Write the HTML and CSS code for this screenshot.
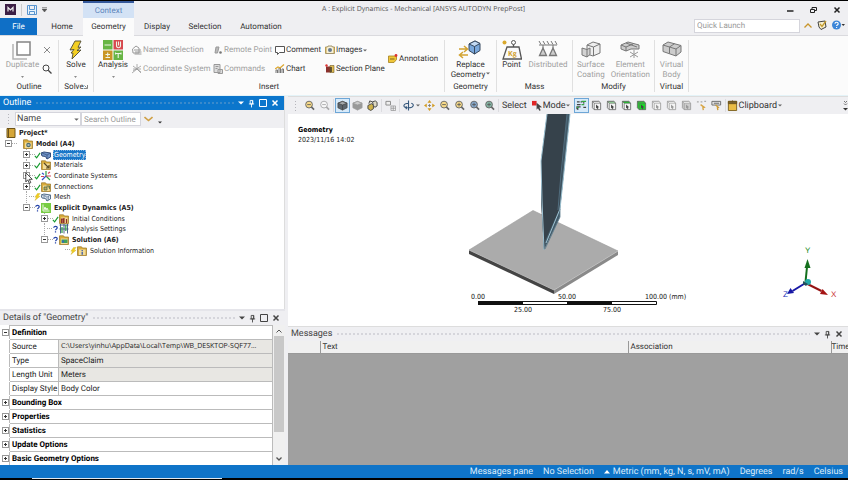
FILE: index.html
```html
<!DOCTYPE html>
<html lang="en">
<head>
<meta charset="utf-8">
<title>A : Explicit Dynamics - Mechanical</title>
<link rel="stylesheet" href="styles.css">
</head>
<body>
<svg class="defs" aria-hidden="true">
  <symbol id="i-pin" viewBox="0 0 8 10"><path d="M2.5 1.5h3v4h-3zM1 5.5h6M4 5.5v4" fill="none" stroke="currentColor"/><path d="M4.5 1.5h1v4h-1z" fill="currentColor"/></symbol>
  <symbol id="i-max" viewBox="0 0 8 8"><path d="M.5.5h7v7h-7z" fill="none" stroke="currentColor"/></symbol>
  <symbol id="i-x" viewBox="0 0 8 8"><path d="M1.5 1.5l5 5M6.5 1.5l-5 5" fill="none" stroke="currentColor" stroke-width="1.5"/></symbol>
  <symbol id="i-down" viewBox="0 0 6 4"><path d="M0 .5h6L3 3.5z" fill="currentColor"/></symbol>
  <symbol id="i-check" viewBox="0 0 8 8"><path d="M1 5l2 2.2L7 1.5" fill="none" stroke="#159a2e" stroke-width="1.3"/></symbol>
  <symbol id="i-bolt" viewBox="0 0 8 8"><path d="M4 0L1 4.2h2L1 8l6-5H4.500L7 0z" fill="#f2cf1d" stroke="#c9a512" stroke-width=".4"/></symbol>
  <symbol id="i-ask" viewBox="0 0 8 8"><path d="M2 2.500C2 .6 6 .6 6 2.600 6 4 4 3.800 4 5.500M4 6.500V8" fill="none" stroke="#2543a8" stroke-width="1.400"/></symbol>
  <symbol id="i-folder" viewBox="0 0 10 10"><path d="M.5 2V.8h4L5.500 2h4v7.500h-9z" fill="#d9ac3c" stroke="#967223" stroke-width=".7"/><path d="M2 3.500h6.500V9H2z" fill="#f2dc99"/></symbol>
  <symbol id="i-mag" viewBox="0 0 12 12"><circle cx="5.500" cy="5" r="3.700" fill="var(--lens,#fff)" stroke="#666"/><path d="M3.500 5h4" stroke="#555" stroke-width=".9"/><path d="M8 7.500l3 3" stroke="#666" stroke-width="1.700"/></symbol>
  <symbol id="i-magplus" viewBox="0 0 12 12"><use href="#i-mag"/><path d="M5.500 3v4" stroke="#555" stroke-width=".9"/></symbol>
  <symbol id="i-cube" viewBox="0 0 12 12"><path d="M1 3.500L6 1.500l5 2v5l-5 2.500-5-2.500z" fill="var(--side,#ddd)" stroke="var(--line,#555)" stroke-width=".8"/><path d="M1 3.500l5-2 5 2-5 2z" fill="var(--top,#f5f5f5)" stroke="var(--line,#555)" stroke-width=".8"/><path d="M6 5.500V11" stroke="var(--line,#555)" stroke-width=".8"/></symbol>
  <symbol id="i-pick" viewBox="0 0 12 12"><path d="M1.500 1.500h7l2 2v7h-7l-2-2z" fill="var(--face,#f4f4f4)" stroke="var(--edge,#666)" stroke-width=".9"/><path d="M1.500 1.500h7l2 2h-7z" fill="var(--lid,#f4f4f4)" stroke="var(--edge,#666)" stroke-width=".7"/><path d="M3.500 3.500v7" stroke="var(--edge,#666)" stroke-width=".8"/><path d="M5.500 5l3.500 3-1.500.2.500 1.800-1 .2-.5-1.700-1 .9z" fill="var(--edge,#444)"/></symbol>
</svg>

<div class="app">
  <header class="top">
    <div class="caption">
      <div class="quick">
        <svg width="11" height="11" viewBox="0 0 11 11"><path d="M0 0h11v11H0z" fill="#3c1f45"/><path d="M3 7.500v-4l2.500 2.500L8 3.500v4" fill="none" stroke="#eee" stroke-width="1.200"/></svg>
        <i class="bar"></i>
        <svg width="10" height="10" viewBox="0 0 10 10"><path d="M.5.5h9v9h-9zM2.500.5v4h5v-4M2.500 9.500V6.500h5v3" fill="#e7f3fc" stroke="#5a95cf"/></svg>
        <svg width="5" height="5" viewBox="0 0 5 5"><path d="M0 .5h5M0 2h5L2.500 5z" fill="#555" stroke="#555" stroke-width=".5"/></svg>
      </div>
      <div class="context">Context</div>
      <h1>A : Explicit Dynamics - Mechanical [ANSYS AUTODYN PrepPost]</h1>
      <div class="window">
        <button aria-label="Minimize"><svg width="7" height="8" viewBox="0 0 7 8"><path d="M0 5h6.500" stroke="#222" stroke-width="1.500"/></svg></button>
        <button aria-label="Restore"><svg width="7" height="8" viewBox="0 0 7 8"><path d="M.5 3.500h4v3h-4zM2 3V1.500h4.500v3H5" fill="none" stroke="#222"/></svg></button>
        <button aria-label="Close"><svg width="8" height="8"><use href="#i-x"/></svg></button>
      </div>
    </div>
    <div class="tabs">
      <nav>
        <a class="file" href="#file">File</a><a class="home" href="#home">Home</a><a class="geo" href="#geometry">Geometry</a><a class="disp" href="#display">Display</a><a class="sel" href="#selection">Selection</a><a class="auto" href="#automation">Automation</a>
      </nav>
      <input type="search" aria-label="Quick Launch" placeholder="Quick Launch">
      <div class="help">
        <svg width="8" height="5" viewBox="0 0 8 5"><path d="M.5 4.500L4 1l3.500 3.500" fill="none" stroke="#c8952c" stroke-width="1.300"/></svg>
        <svg width="10" height="10" viewBox="0 0 10 10"><path d="M1 2l7-1 1 6-5 2.500L2 7z" fill="#f7efcf" stroke="#444"/><path d="M3 4l2 2.500L9 1" fill="none" stroke="#c29a2e" stroke-width="1.300"/></svg>
        <svg width="13" height="10" viewBox="0 0 13 10"><circle cx="4.500" cy="5" r="4.500" fill="#3d86d8"/><path d="M3 3.800c0-2 3.200-2 3.200 0C6.200 5 4.600 5 4.600 6M4.600 7v1" fill="none" stroke="#fff" stroke-width="1.100"/><path d="M9.500 4h3.500L11.200 6z" fill="#333"/></svg>
      </div>
    </div>
  </header>

  <section class="ribbon" aria-label="Geometry ribbon">
    <div class="group g-outline">
      <div class="items">
        <button class="big dim"><svg width="20" height="20" viewBox="0 0 20 20"><path d="M1 4v15h14" fill="none" stroke="#b3b3b3" stroke-width="1.500"/><path d="M5 2h13v13H5z" fill="#fff" stroke="#858585" stroke-width="1.500"/></svg><span>Duplicate</span><svg class="dd" width="3" height="2"><use href="#i-down"/></svg></button>
        <div class="pair">
          <button aria-label="Delete"><svg width="8" height="8" viewBox="0 0 8 8"><path d="M1 1l6 6M7 1L1 7" stroke="#888"/></svg></button>
          <button aria-label="Find"><svg width="10" height="10" viewBox="0 0 10 10"><circle cx="4" cy="4" r="3" fill="none" stroke="#444"/><path d="M6.200 6.200L9.500 9.500" stroke="#444" stroke-width="1.300"/></svg></button>
        </div>
      </div>
      <h2>Outline</h2>
    </div>
    <div class="group g-solve">
      <div class="items"><button class="big"><svg width="14" height="20" viewBox="0 0 14 20"><path d="M6 1L1 10l4-.5L2 13l2 .2L3 19l9-9-4 .500 4-3.500-3 .300L12 1z" fill="#f3cf22" stroke="#4e4b35" stroke-width=".9"/></svg><span>Solve</span><svg class="dd" width="3" height="2"><use href="#i-down"/></svg></button></div>
      <h2>Solve<svg class="corner" width="4" height="4" viewBox="0 0 4 4"><path d="M3.500 0v3.500H0M.5.5l2 2" fill="none" stroke="#666" stroke-width=".8"/></svg></h2>
    </div>
    <div class="group g-insert">
      <div class="items">
        <button class="big"><svg width="20" height="20" viewBox="0 0 20 20"><path d="M0 0h9.500v9.500H0zM10.500 10.500H20V20h-9.500z" fill="#67b545"/><path d="M10.500 0H20v9.500h-9.500z" fill="#d7494e"/><path d="M0 10.500h9.500V20H0z" fill="#c99625"/><path d="M1.500 5h6.500M2.500 17.500h4.500M2.500 14.500h4.500M4.700 12.500v4M13.500 1.500v4c0 3 4 3 4 0v-4M15.500 1.500v4M12.500 13.500h5.500M15.200 13.500v4.500M12.500 12.500v2M18 12.500v2" fill="none" stroke="#eef5e8" stroke-width="1.100"/></svg><span>Analysis</span><svg class="dd" width="3" height="2"><use href="#i-down"/></svg></button>
        <div class="cmds">
          <button class="dim"><svg width="10" height="10" viewBox="0 0 10 10"><path d="M.5 4L4 1l3 2v5H1zM2 5h7M3 7h6.500M2.500 9h7" fill="none" stroke="#999"/></svg>Named Selection</button>
          <button class="dim"><svg width="10" height="10" viewBox="0 0 10 10"><path d="M2 8l1-6h3L4.500 8z" fill="#bbb" stroke="#999"/><circle cx="7.500" cy="7.500" r="1.300" fill="#777"/></svg>Remote Point</button>
          <button><svg width="10" height="10" viewBox="0 0 10 10"><path d="M.5 1.500h9v6H4.500l-2 2v-2h-2z" fill="#fff" stroke="#555"/></svg>Comment</button>
          <button><svg width="10" height="10" viewBox="0 0 10 10"><path d="M.5 2h2l.5-1h4l.5 1h2v6.500h-9z" fill="#f8f1d7" stroke="#8b7b4d" stroke-width=".8"/><circle cx="5" cy="5" r="2" fill="#677b91"/><path d="M1 2v6M9 2v6" stroke="#caa747"/></svg>Images<svg class="dd" width="4" height="3"><use href="#i-down"/></svg></button>
          <button class="dim"><svg width="10" height="10" viewBox="0 0 10 10"><path d="M5 5V0M5 5l4 4M5 5L0 9M1 2l8 6M9 2L1 7M1 5h8" fill="none" stroke="#999" stroke-width=".8"/></svg>Coordinate System</button>
          <button class="dim"><svg width="10" height="10" viewBox="0 0 10 10"><path d="M1 .5h6v8H1zM2.500 2.500h3M2.500 4.500h2M5 5.500h4.500v4H5z" fill="#ddd" stroke="#999"/></svg>Commands</button>
          <button><svg width="10" height="10" viewBox="0 0 10 10"><path d="M1 9V6h1.500v3M4 9V4h1.500v5M7 9V5h1.500v4" fill="none" stroke="#777"/><path d="M0 5l3-2 2 1 4-3.500" fill="none" stroke="#dda832" stroke-width="1.300"/></svg>Chart</button>
          <button><svg width="10" height="10" viewBox="0 0 10 10"><path d="M1 2.500h5v6H1z" fill="#8a302d"/><path d="M5 1.500h4v7H5z" fill="#e0bd52" stroke="#715a26" stroke-width=".6"/><path d="M6 3v5" stroke="#3c352b" stroke-width="1.500"/><circle cx="1.500" cy="1.500" r="1.200" fill="#d33"/></svg>Section Plane</button>
        </div>
        <button class="note"><svg width="10" height="10" viewBox="0 0 10 10"><path d="M.5 2h8v3.500L6 8.500H.5z" fill="#f0c638" stroke="#a4801d" stroke-width=".8"/><path d="M2 5h4.500" stroke="#806620"/><circle cx="8" cy="1.500" r="1.400" fill="#d33"/></svg>Annotation</button>
      </div>
      <h2>Insert</h2>
    </div>
    <div class="group g-geo">
      <div class="items"><button class="big"><svg width="24" height="20" viewBox="0 0 24 20"><path d="M11 4l6-3 5 2.500v7L16.500 14 11 10.500z" fill="#7aa8dc" stroke="#36485e"/><path d="M11 4l6-3 5 2.500-5.500 3z" fill="#c3daf3" stroke="#36485e"/><path d="M16.500 6.500V14" stroke="#36485e"/><path d="M1 9h8M6 6l3.500 3L6 12M10 15H2M5 12l-3.500 3L5 18" fill="none" stroke="#d2a331" stroke-width="1.500"/></svg><span>Replace<br>Geometry<svg class="dd" width="4" height="3"><use href="#i-down"/></svg></span></button></div>
      <h2>Geometry</h2>
    </div>
    <div class="group g-mass">
      <div class="items">
        <button class="big"><svg width="20" height="20" viewBox="0 0 20 20"><circle cx="11.500" cy="2.500" r="2" fill="none" stroke="#555"/><path d="M11.500 4.500V7M5 7h12l2.500 12H1z" fill="#fafafa" stroke="#555" stroke-width="1.300"/><circle cx="2.500" cy="2.500" r="2" fill="#d9a92d"/><text x="6" y="16" class="kg">Kg</text></svg><span>Point</span></button>
        <button class="big dim"><svg width="20" height="20" viewBox="0 0 20 20"><path d="M1 5h18M3 4.500L1 1M7 4.500L5 1M11 4.500L9 1M15 4.500L13 1M19 4.500L17 1M5 5v3M15 5v3M2 14h6M12 14h6" fill="none" stroke="#777"/><path d="M5 8L1.500 15.500h7zM15 8l-3.500 7.500h7z" fill="#ccc" stroke="#777" stroke-width="1.300"/></svg><span>Distributed</span></button>
      </div>
      <h2>Mass</h2>
    </div>
    <div class="group g-modify">
      <div class="items">
        <button class="big dim"><svg width="20" height="20" viewBox="0 0 20 20"><path d="M6 5l6-3 7 2v9l-7 3-6-2z" fill="#eee" stroke="#777"/><path d="M6 5l6.500 2L19 4M12.500 7v9" fill="none" stroke="#777"/><path d="M1 8l5 1.500 3-1.500v6.500L6 17l-5-2zM6 9.500V17" fill="#d2d2d2" stroke="#777"/></svg><span>Surface<br>Coating</span></button>
        <button class="big dim"><svg width="20" height="20" viewBox="0 0 20 20"><path d="M1 5l7-3 11 3v4H11L6 11 1 9z" fill="#ccc" stroke="#777"/><path d="M1 5l5 2 7-3M6 7v4M6 3l11 4" fill="none" stroke="#777"/><path d="M14 10v8M10 12l8 5M18 12l-8 5" stroke="#999"/></svg><span>Element<br>Orientation</span></button>
      </div>
      <h2>Modify</h2>
    </div>
    <div class="group g-virtual">
      <div class="items"><button class="big dim"><svg width="20" height="20" viewBox="0 0 20 20"><path d="M1 5l5-3 13 3.500V12l-5 4L1 11.500z" fill="#ccc" stroke="#777"/><path d="M1 5l13 4 5-3.500M14 9v7M7.500 7v6.500M7.500 7l5-3.300" fill="none" stroke="#777"/></svg><span>Virtual<br>Body</span></button></div>
      <h2>Virtual</h2>
    </div>
  </section>

  <main>
    <aside>
      <section class="outline">
        <div class="ptitle active"><h2>Outline</h2><i class="grip"></i><button aria-label="Options"><svg width="6" height="4"><use href="#i-down"/></svg></button><button aria-label="Pin"><svg width="7" height="9"><use href="#i-pin"/></svg></button><button aria-label="Maximize"><svg width="8" height="8"><use href="#i-max"/></svg></button><button aria-label="Close"><svg width="8" height="8"><use href="#i-x"/></svg></button></div>
        <div class="filter">
          <i class="handle"></i>
          <div class="select"><select aria-label="Filter by"><option>Name</option></select><svg width="5" height="3"><use href="#i-down"/></svg></div>
          <input type="text" aria-label="Search Outline" placeholder="Search Outline">
          <svg width="9" height="6" viewBox="0 0 9 6"><path d="M.5 1L4.500 4.500l4-3.500" fill="none" stroke="#cfa046" stroke-width="1.600"/></svg>
          <svg class="low" width="4" height="3"><use href="#i-down"/></svg>
        </div>
        <ul class="tree">
          <li class="l0 b"><svg class="ic" viewBox="0 0 10 10"><path d="M1 .5h8v9H1z" fill="#d5a638" stroke="#6e5418"/><path d="M2.500.5v9" stroke="#6e5418"/></svg><span>Project*</span></li>
          <li class="l1 b"><i class="ex minus"></i><i class="st"></i><svg class="ic" viewBox="0 0 10 10"><use href="#i-folder"/><circle cx="5.500" cy="6" r="2.300" fill="#4d6d72"/><path d="M4.500 6h2" stroke="#fff"/></svg><span>Model (A4)</span></li>
          <li class="l2 v"><i class="ex plus"></i><svg class="st"><use href="#i-check"/></svg><svg class="ic" viewBox="0 0 10 10"><path d="M0 3l3-1 6.500 1v4L6 9 4.500 6.500 1 6z" fill="#6f93c8" stroke="#344f7b"/><path d="M1 3l5 2 3.500-2M6 5v4" fill="none" stroke="#344f7b" stroke-width=".7"/></svg><span class="on">Geometry</span></li>
          <li class="l2 v"><i class="ex plus"></i><svg class="st"><use href="#i-check"/></svg><svg class="ic" viewBox="0 0 10 10"><use href="#i-folder"/><path d="M3 3l5 5M8 5v3H5" fill="none" stroke="#5b4a24" stroke-width="1.200"/></svg><span>Materials</span></li>
          <li class="l2 v"><i class="ex plus"></i><svg class="st"><use href="#i-check"/></svg><svg class="ic" viewBox="0 0 10 10"><path d="M5 5V0M5 5l4 4" stroke="#2ea14a" stroke-width="1.200"/><path d="M5 5L1 9M1 2l2 1.500" stroke="#3553c8" stroke-width="1.200"/><path d="M5 5h5M0 5.500h3M7 2.500L9 1" stroke="#d4455b" stroke-width="1.200"/></svg><span>Coordinate Systems</span></li>
          <li class="l2 v"><i class="ex plus"></i><svg class="st"><use href="#i-check"/></svg><svg class="ic" viewBox="0 0 10 10"><use href="#i-folder"/><path d="M3 5h3v3H3zM5.500 4h3v3" fill="#c6a958" stroke="#4c6c48" stroke-width=".8"/></svg><span>Connections</span></li>
          <li class="l2 v"><i class="ex"></i><svg class="st"><use href="#i-bolt"/></svg><svg class="ic" viewBox="0 0 10 10"><path d="M0 3l3-1 6.500 1v4L6 9 4.500 6.500 1 6z" fill="#dce6f2" stroke="#566f8b"/><path d="M1 3l5 2 3.500-2M6 5v4M3 3.500l3-1M3 4v2.500M7.500 4v4" fill="none" stroke="#566f8b" stroke-width=".6"/></svg><span>Mesh</span></li>
          <li class="l2 b"><i class="ex minus"></i><svg class="st"><use href="#i-ask"/></svg><svg class="ic" viewBox="0 0 10 10"><path d="M0 0h10v10H0z" fill="#77cc43"/><path d="M2 1.500v6.500h6.500M3 7l1-3 1 3 1-2 1 2" fill="none" stroke="#eef9e6"/></svg><span>Explicit Dynamics (A5)</span></li>
          <li class="l3 v"><i class="ex plus"></i><svg class="st"><use href="#i-check"/></svg><svg class="ic" viewBox="0 0 10 10"><use href="#i-folder"/><path d="M2.500 9V5h1.500v4M5 9V4M7.500 9V5" fill="none" stroke="#8d2f2a" stroke-width="1.200"/></svg><span>Initial Conditions</span></li>
          <li class="l3 v"><i class="ex"></i><svg class="st"><use href="#i-ask"/></svg><svg class="ic" viewBox="0 0 10 10"><path d="M.5 1h9M.5 5h9M1.500 0v9.500M5 0v9.500M8.500 0v9.500" stroke="#3c557f" stroke-width=".9"/><path d="M3 3v6M6.800 1v6" stroke="#38a652" stroke-width="1.300"/></svg><span>Analysis Settings</span></li>
          <li class="l3 b"><i class="ex minus"></i><svg class="st"><use href="#i-ask"/></svg><svg class="ic" viewBox="0 0 10 10"><use href="#i-folder"/><path d="M2.500 4.500h6V8h-6z" fill="#41a05c"/><path d="M3 5.500h2v2H3z" fill="#3867bb"/></svg><span>Solution (A6)</span></li>
          <li class="l4"><i class="ex"></i><svg class="st"><use href="#i-bolt"/></svg><svg class="ic" viewBox="0 0 10 10"><use href="#i-folder"/><path d="M5.200 4v1M5.200 5.800v3" stroke="#3c5ba8" stroke-width="1.300"/></svg><span>Solution Information</span></li>
        </ul>
        <svg class="cursor" width="8" height="12" viewBox="0 0 8 12"><path d="M.8.8v9l2-2 1.500 3.500 1.500-.7L4.300 7.300h3z" fill="#fff" stroke="#222" stroke-width=".8"/></svg>
      </section>
      <section class="details">
        <div class="ptitle"><h2>Details of "Geometry"</h2><i class="grip"></i><button aria-label="Options"><svg width="6" height="4"><use href="#i-down"/></svg></button><button aria-label="Pin"><svg width="7" height="9"><use href="#i-pin"/></svg></button><button aria-label="Maximize"><svg width="8" height="8"><use href="#i-max"/></svg></button><button aria-label="Close"><svg width="8" height="8"><use href="#i-x"/></svg></button></div>
        <div class="dbody">
          <table>
            <colgroup><col class="c0"><col class="c1"><col></colgroup>
            <tr><td class="x"><i class="ex minus"></i></td><th colspan="2">Definition</th></tr>
            <tr><td class="x"></td><td>Source</td><td class="ro path">C:\Users\yinhu\AppData\Local\Temp\WB_DESKTOP-SQF77...</td></tr>
            <tr><td class="x"></td><td>Type</td><td class="ro">SpaceClaim</td></tr>
            <tr><td class="x"></td><td>Length Unit</td><td class="ro">Meters</td></tr>
            <tr><td class="x"></td><td>Display Style</td><td>Body Color</td></tr>
            <tr><td class="x"><i class="ex plus"></i></td><th colspan="2">Bounding Box</th></tr>
            <tr><td class="x"><i class="ex plus"></i></td><th colspan="2">Properties</th></tr>
            <tr><td class="x"><i class="ex plus"></i></td><th colspan="2">Statistics</th></tr>
            <tr><td class="x"><i class="ex plus"></i></td><th colspan="2">Update Options</th></tr>
            <tr><td class="x"><i class="ex plus"></i></td><th colspan="2">Basic Geometry Options</th></tr>
          </table>
          <div class="scroll"><svg width="6" height="4" viewBox="0 0 6 4"><path d="M.5 3.500L3 1l2.500 2.500" fill="none" stroke="#555"/></svg><i></i><svg width="6" height="4" viewBox="0 0 6 4"><path d="M.5.5L3 3 5.500.5" fill="none" stroke="#555" stroke-width="1.300"/></svg></div>
        </div>
      </section>
    </aside>

    <div class="work">
      <div class="tools">
        <i class="handle"></i>
        <button aria-label="Zoom out" class="gold"><svg><use href="#i-mag"/></svg></button>
        <button aria-label="Zoom"><svg opacity=".5"><use href="#i-mag"/></svg></button>
        <i class="sep"></i>
        <button aria-label="Shaded with edges" class="pressed dark"><svg><use href="#i-cube"/></svg></button>
        <button aria-label="Shaded" class="mid"><svg><use href="#i-cube"/></svg></button>
        <button aria-label="Show mesh"><svg viewBox="0 0 12 12"><path d="M1 6l4-2 2 1.500v4L4 11.500 1 9.500z" fill="#cfb24b" stroke="#444"/><path d="M6 2l3-1 2 1.500v4L8.500 8 7 6zM2 4l1-3 3 1" fill="#ded9c3" stroke="#444"/></svg></button>
        <i class="sep"></i>
        <button aria-label="Viewports"><svg viewBox="0 0 12 12"><path d="M1 1.500h5v4H1z" fill="#eee" stroke="#888"/><path d="M6.500 6.500h5v5h-5zM9 6.500v5M6.500 9h5" fill="none" stroke="#888" stroke-width=".7"/></svg></button>
        <i class="sep"></i>
        <button aria-label="Rotate" class="rot"><svg viewBox="0 0 12 12"><path d="M6 .5v11M6 3.500C0 3.500-.5 8 4 8.500M6 8.500c6 0 6.500-4 3-5M3 7l1.500 1.500L3 10" fill="none" stroke="#35577c" stroke-width="1.200"/></svg><svg class="dd" width="4" height="3"><use href="#i-down"/></svg></button>
        <button aria-label="Pan"><svg viewBox="0 0 12 12"><path d="M6 0l2.200 3H3.800zM6 12l2.200-3H3.800zM0 6l3-2.200v4.400zM12 6L9 3.800v4.400z" fill="#d49b20"/><path d="M6 4.500v3M4.500 6h3" stroke="#777"/></svg></button>
        <button aria-label="Zoom out more" class="gold"><svg><use href="#i-mag"/></svg></button>
        <button aria-label="Zoom in" class="gold"><svg><use href="#i-magplus"/></svg></button>
        <button aria-label="Zoom box" class="blue"><svg><use href="#i-magplus"/></svg></button>
        <button aria-label="Zoom fit" class="green"><svg><use href="#i-magplus"/></svg></button>
        <i class="sep"></i>
        <span class="word">Select</span>
        <button class="mode"><svg viewBox="0 0 12 12"><path d="M0 1h5v5H0z" fill="#e02525"/><path d="M5 3l6 5-3 .2 1.500 3-1.500.6L6.500 9 5 10.500z" fill="#444"/></svg>Mode<svg class="dd" width="4" height="3"><use href="#i-down"/></svg></button>
        <button aria-label="Smart select" class="pressed"><svg viewBox="0 0 12 12"><path d="M1 2h3M5 2h2M8.500 1v3M1 5h4M1 10V7.500h4M8 8h3M2 11v-4" fill="none" stroke="#444" stroke-width="1.200"/><path d="M6 1.500h5M6 5h3M1 8h2" stroke="#35a844" stroke-width="1.400"/></svg></button>
        <button aria-label="Vertex"><svg><use href="#i-pick"/></svg></button>
        <button aria-label="Edge" class="edge"><svg><use href="#i-pick"/></svg></button>
        <button aria-label="Face" class="face"><svg><use href="#i-pick"/></svg></button>
        <button aria-label="Body" class="body"><svg><use href="#i-pick"/></svg></button>
        <button aria-label="Node" class="soft"><svg><use href="#i-pick"/></svg></button>
        <button aria-label="Element face" class="soft"><svg><use href="#i-pick"/></svg></button>
        <button aria-label="Element" class="soft full"><svg><use href="#i-pick"/></svg></button>
        <button aria-label="Coordinates"><svg viewBox="0 0 12 12"><path d="M1 2h2M5 2h2M9 1.500h2" stroke="#aaa" stroke-width="1.300"/><path d="M5 5l4 3-1.500.5.5 2.500" fill="none" stroke="#d7a545" stroke-width="1.500"/></svg></button>
        <button aria-label="Label"><svg viewBox="0 0 12 12"><path d="M1 1.500h9.500v4H1z" fill="#eee" stroke="#666"/><path d="M3 3.500h6" stroke="#555"/><path d="M5 5.500l3 2.500-1 .5.5 2.500" fill="none" stroke="#cf9c35" stroke-width="1.500"/></svg></button>
        <i class="sep"></i>
        <button class="clip"><svg viewBox="0 0 12 12"><path d="M1.500 1.500h9v10h-9z" fill="#ebbd45" stroke="#7a5e1d"/><path d="M1.500 1.500h9V4h-9zM6 .5v2" fill="#796232" stroke="#6d541e"/></svg>Clipboard<svg class="dd" width="4" height="3"><use href="#i-down"/></svg></button>
        <svg class="more" viewBox="0 0 5 12"><path d="M1 1l1.500 1.500L4 1M1 3.500L2.500 5 4 3.500" fill="none" stroke="#555" stroke-width=".8"/><path d="M0 8h5L2.500 10.500z" fill="#333"/></svg>
      </div>
      <section class="view">
        <svg viewBox="0 0 560 212" role="img" aria-label="Model view">
          <path d="M181 136L245 96.500 330 137 266 176z" fill="#ababab" stroke="#9b9b9b" stroke-width=".6"/>
          <path d="M181 136v4l85 40v-4z" fill="#444"/>
          <path d="M266 176v4l64-39v-4z" fill="#8a8a8a"/>
          <path d="M181 136l85 40 64-39" fill="none" stroke="#c7c7c7" stroke-width=".8"/>
          <path d="M259 0L253 47v38l3 51 2-9 14-31L282 0z" fill="#36424b"/>
          <path d="M278 0h4l-10 96v7l-16 33-1-7 14-33z" fill="#435b69"/>
          <path d="M259 0h20l-5 60-3 36-14 31-1 9-3-51V47z" fill="#36424b"/>
          <path d="M259 0L253 47l1 40 2 49M282 0l-6 58-4 37-14 34" fill="none" stroke="#9fc3d3" stroke-width="1"/>
          <path d="M279 0l-6 60-3 36M272 95v8l-15 32" fill="none" stroke="#58798b" stroke-width=".8"/>
          <path d="M190.500 187.500h178v3h-178z" fill="#fff" stroke="#111"/>
          <path d="M190 187h45v4h-45zM279 187h45v4h-45z" fill="#111"/>
          <g class="scale"><text x="190" y="185">0.00</text><text x="279" y="185">50.00</text><text x="357" y="185" class="start">100.00 (mm)</text><text x="235" y="198">25.00</text><text x="324" y="198">75.00</text></g>
          <path d="M517.500 168L519 153" stroke="#14701d" stroke-width="2"/><path d="M519.500 145l3 9h-6z" fill="#14701d"/>
          <path d="M517.500 169l-13 8" stroke="#1818a5" stroke-width="2"/><path d="M499 180l3.500-6 3.500 5z" fill="#1818a5"/>
          <path d="M517.500 169l16 8" stroke="#951414" stroke-width="2"/><path d="M540 181l-8-1 2.500-5z" fill="#a51414"/>
          <circle cx="520" cy="168" r="3" fill="#23a9a9"/><path d="M515 167l5 3-2 2-3-2z" fill="#26505a"/>
          <g class="axis"><text x="517" y="139" fill="#1c8d2a">Y</text><text x="495" y="183" fill="#2232b5">Z</text><text x="543" y="183" fill="#c82828">X</text></g>
        </svg>
        <div class="legend"><b>Geometry</b><span>2023/11/16 14:02</span></div>
      </section>
      <section class="messages">
        <div class="ptitle"><h2>Messages</h2><i class="grip"></i><button aria-label="Options"><svg width="6" height="4"><use href="#i-down"/></svg></button><button aria-label="Pin"><svg width="7" height="9"><use href="#i-pin"/></svg></button><button aria-label="Close"><svg width="8" height="8"><use href="#i-x"/></svg></button></div>
        <table><colgroup><col class="m0"><col><col class="m2"><col class="m3"></colgroup><tr><th></th><th>Text</th><th>Association</th><th>Time</th></tr></table>
      </section>
    </div>
  </main>

  <footer>
    <span>Messages pane</span><span>No Selection</span><span><svg width="6" height="4" viewBox="0 0 6 4"><path d="M3 0l3 3.500H0z" fill="#fff"/></svg>Metric (mm, kg, N, s, mV, mA)</span><span>Degrees</span><span>rad/s</span><span>Celsius</span>
  </footer>
  <div class="taskbar"><i></i></div>
</div>
</body>
</html>
```
FILE: styles.css
```css
* { box-sizing: border-box; }
body {
  margin: 0;
  font: 8px/10px Roboto, "Noto Sans", sans-serif;
  text-rendering: geometricPrecision;
  color: #333;
  background: #efeff2;
}
h1, h2 { margin: 0; font-size: inherit; font-weight: normal; white-space: nowrap; }
button { display: flex; align-items: center; padding: 0; border: 0; background: none; font: inherit; color: inherit; text-rendering: inherit; white-space: nowrap; }
input, select { font: inherit; text-rendering: inherit; color: #444; border: 1px solid #d5d5dc; border-radius: 0; background: #fff; min-width: 0; }
input::placeholder { color: #999; opacity: 1; }
svg { flex: none; display: block; }
table { border-collapse: collapse; }
.defs { position: absolute; width: 0; height: 0; }
.dd { color: #666; }

.app { display: flex; flex-direction: column; height: 100vh; border-top: 1px solid #000; overflow: hidden; }

/* Title bar and tabs */
.caption { display: flex; height: 17px; align-items: stretch; }
.quick { display: flex; align-items: center; gap: 5px; width: 83px; padding-left: 5px; }
.quick .bar { width: 1px; height: 12px; margin: 0; background: #ccc; }
.context { width: 51px; padding-top: 3px; border-top: 2px solid #34589b; background: #d3e2f5; color: #5c84bb; text-align: center; }
.caption h1 { flex: 1; padding: 4px 14px 0 0; text-align: center; color: #555; }
.caption h1, .dbody .path { font-family: "Open Sans", "Noto Sans", sans-serif; font-size: 7px; }
.window { display: flex; align-items: center; gap: 16px; padding: 0 7px 0 60px; color: #222; }
.tabs { display: flex; height: 18px; align-items: stretch; border-bottom: 1px solid #dadade; }
.tabs nav { display: flex; flex: 1; }
.tabs a { display: flex; align-items: center; justify-content: center; color: #333; text-decoration: none; }
.tabs .file { width: 37px; background: #0f6fc6; color: #fff; }
.tabs .home { width: 46px; padding-left: 4px; }
.tabs .geo { width: 51px; margin-bottom: -1px; background: #fbfbfb; }
.tabs .disp { width: 46px; }
.tabs .sel { width: 50px; }
.tabs .auto { width: 62px; }
.tabs input { width: 106px; margin: 1px 0 2px; padding: 0 2px; }
.help { display: flex; align-items: center; gap: 5px; padding: 0 3px 3px 4px; }

/* Ribbon */
.ribbon { display: flex; flex: none; height: 60px; padding: 4px 0 3px; background: #fbfbfb; border-bottom: 1px solid #e4f3f8; }
.group { display: flex; flex-direction: column; border-right: 1px solid #e0e0e0; }
.group h2 { text-align: center; }
.corner { display: inline-block; }
.items { display: flex; flex: 1; justify-content: center; }
.big { flex-direction: column; text-align: center; }
.big > .dd { margin-top: 6px; }
.big span .dd { display: inline-block; margin: 0 0 2px 1px; }
.dim { color: #a0a0a0; }
.kg { font: bold 7px "Open Sans", sans-serif; fill: #d1a02b; }
.g-outline { width: 59px; }
.g-outline .items { gap: 3px; }
.pair { display: flex; flex-direction: column; align-items: center; gap: 10px; padding-top: 6px; }
.g-solve { width: 35px; }
.g-insert { width: 351px; }
.g-insert .items { justify-content: flex-start; padding-left: 4px; }
.g-insert .big { width: 30px; }
.cmds { display: grid; grid-template-columns: 81px 62px 50px 62px; grid-template-rows: 10px 10px; row-gap: 9px; padding: 5px 0 0 4px; }
.cmds button, .note { gap: 1px; }
.note { height: 10px; margin: 14px 0 0 1px; }
.g-geo { width: 52px; }
.g-mass { width: 76px; }
.g-mass .items { gap: 7px; }
.g-modify { width: 82px; }
.g-modify .items { gap: 6px; }
.g-virtual { width: 34px; }

/* Panels */
main { display: flex; flex: 1; min-height: 0; }
aside { display: flex; flex-direction: column; flex: none; width: 285px; }
.ptitle { display: flex; flex: none; align-items: center; gap: 4px; height: 14px; padding: 0 5px 0 3px; background: #efeff2; color: #444; font-size: 9px; }
.ptitle.active { background: #0b76cc; color: #fff; }
.grip { flex: 1; height: 4px; background: radial-gradient(circle, #c4c4cc 0 1px, transparent 1px) 0 0 / 4px 4px; opacity: .6; }
.active .grip { opacity: .25; }
.handle { width: 3px; height: 12px; background: radial-gradient(circle, #b5b5bb 0 1px, transparent 1px) 0 0 / 3px 3px; }
.outline { position: relative; flex: 1; background: #fff; border-right: 1px solid #ddd; }
.filter { display: flex; align-items: center; height: 18px; padding-left: 7px; background: #efeff2; }
.select { position: relative; width: 66px; height: 14px; margin-left: 5px; }
.select select { width: 100%; height: 100%; padding: 0 1px; font-size: 9px; appearance: none; }
.select svg { position: absolute; right: 2px; top: 6px; color: #666; }
.filter input { width: 60px; height: 14px; margin-right: 3px; padding: 0 2px; }
.filter .low { margin: 6px 0 0 5px; }

.tree { display: grid; grid-template-rows: repeat(12, 1fr); height: 128px; margin: 0; padding: 0; list-style: none; color: #222; font-family: "DejaVu Sans Condensed", "DejaVu Sans", sans-serif; font-size: 7px; }
.tree li { position: relative; display: flex; align-items: center; white-space: nowrap; }
.tree span { margin-left: 2px; padding: 0 1px; line-height: 10px; }
.tree .on { background: #1976c8; color: #fff; outline: 1px dotted #7fb2e2; outline-offset: -1px; }
.b { font-weight: bold; }
.l0 { padding-left: 6px; }
.l1 { padding-left: 5px; }
.l2 { padding-left: 23px; }
.l3 { padding-left: 41px; }
.l4 { padding-left: 59px; }
.v::before { content: ""; position: absolute; top: 0; bottom: 0; border-left: 1px dotted #aaa; }
.l2.v::before { left: 26px; }
.l3.v::before { left: 44px; }
.ex { position: relative; display: block; flex: none; width: 7px; height: 7px; }
.ex.plus, .ex.minus { border: 1px solid #999; background: linear-gradient(#333, #333) center / 3px 1px no-repeat #fff; }
.ex.plus { background: linear-gradient(#333, #333) center / 3px 1px no-repeat, linear-gradient(#333, #333) center / 1px 3px no-repeat #fff; }
.tree .ex::after { content: ""; position: absolute; left: 6px; top: 2px; width: 5px; border-top: 1px dotted #aaa; }
.tree .st { width: 7px; height: 8px; margin-left: 4px; }
.tree .ic { width: 10px; height: 10px; }
.cursor { position: absolute; left: 25px; top: 76px; }

.details { flex: none; border-top: 2px solid #e5e5ea; }
.dbody { display: flex; height: 140px; background: #fff; }
.dbody table { flex: 1; table-layout: fixed; width: 0; color: #222; }
.c0 { width: 9px; }
.c1 { width: 49px; }
.dbody tr { height: 14px; }
.dbody td, .dbody th { height: 14px; padding: 0 0 0 2px; border: 1px solid #bbb; line-height: 10px; text-align: left; white-space: nowrap; overflow: hidden; }
.dbody th { color: #000; }
.dbody .x { padding: 0 1px; border-color: #fff #bbb #fff #fff; }
.dbody .ro { background: #e8e7e3; }
.scroll { display: flex; flex-direction: column; align-items: center; gap: 3px; width: 12px; padding: 4px 0; background: #f0f0f0; }
.scroll i { width: 10px; flex: 1; margin-bottom: 22px; background: #c8c8c8; }

/* Work area */
.work { display: flex; flex-direction: column; flex: 1; min-width: 0; padding-left: 3px; }
.tools { display: flex; flex: none; align-items: center; height: 18px; padding-left: 6px; border-top: 1px solid #ddd; background: #efeff2; font-size: 9px; }
.tools > button > svg:first-child { width: 11px; height: 11px; }
.tools > button { height: 15px; padding: 0 2px; }
.tools .pressed { padding: 0 1px; border: 1px solid #6da6d6; background: #d7eafa; }
.tools .mode, .tools .clip { padding: 0; }
.tools .clip { gap: 1px; }
.tools .mode { margin-right: 4px; }
.tools .rot { gap: 2px; }
.tools .handle { margin-right: 5px; }
.sep { width: 1px; height: 13px; margin: 0 1px; background: #dcdce0; }
.word { margin: 0 5px 0 2px; }
.more { width: 5px; height: 12px; margin-left: auto; }
.gold { --lens: #f5d888; }
.blue { --lens: #86a8cd; }
.green { --lens: #84b5a4; }
.dark { --side: #5d666e; --top: #a5a9ac; --line: #444; }
.mid { --side: #999; --top: #ccc; --line: #999; }
.edge { --lid: #9bdc9f; }
.face { --lid: #1fc52a; }
.body { --lid: #25d52f; --face: #1bd627; }
.soft { --edge: #999; }
.full { --face: #ccc; }

.view { position: relative; flex: 1; min-height: 0; background: #fff; }
.view > svg { width: 100%; height: 100%; }
.legend { position: absolute; left: 10px; top: 11px; display: flex; flex-direction: column; font: 7px/10px "DejaVu Sans Condensed", "DejaVu Sans", sans-serif; color: #222; }
.legend b { color: #000; }
.scale { font: 7px "DejaVu Sans Condensed", "DejaVu Sans", sans-serif; fill: #111; text-anchor: middle; }
.scale .start { text-anchor: start; }
.axis { font: 8px "Liberation Sans", sans-serif; }
.messages { flex: none; height: 139px; border-top: 1px solid #ddd; background: #a0a0a0; }
.messages table { width: 100%; table-layout: fixed; }
.m0 { width: 32px; }
.m2 { width: 203px; }
.m3 { width: 17px; }
.messages th { height: 12px; padding: 0 2px; background: #f0f0f0; border-right: 1px solid #999; border-bottom: 1px solid #999; line-height: 10px; font-weight: normal; text-align: left; }
.messages th:last-child { padding: 0; border-right: 0; }

/* Status bar */
footer { display: flex; flex: none; justify-content: flex-end; align-items: center; gap: 10px; height: 13px; padding-right: 5px; background: #0f74c8; color: #dcecfa; font-size: 9px; }
footer span { display: flex; align-items: center; gap: 3px; }
.taskbar { flex: none; height: 2px; background: #000; }
.taskbar i { display: block; width: 190px; height: 1px; margin-left: 32px; background: #dfe8ef; }
```
